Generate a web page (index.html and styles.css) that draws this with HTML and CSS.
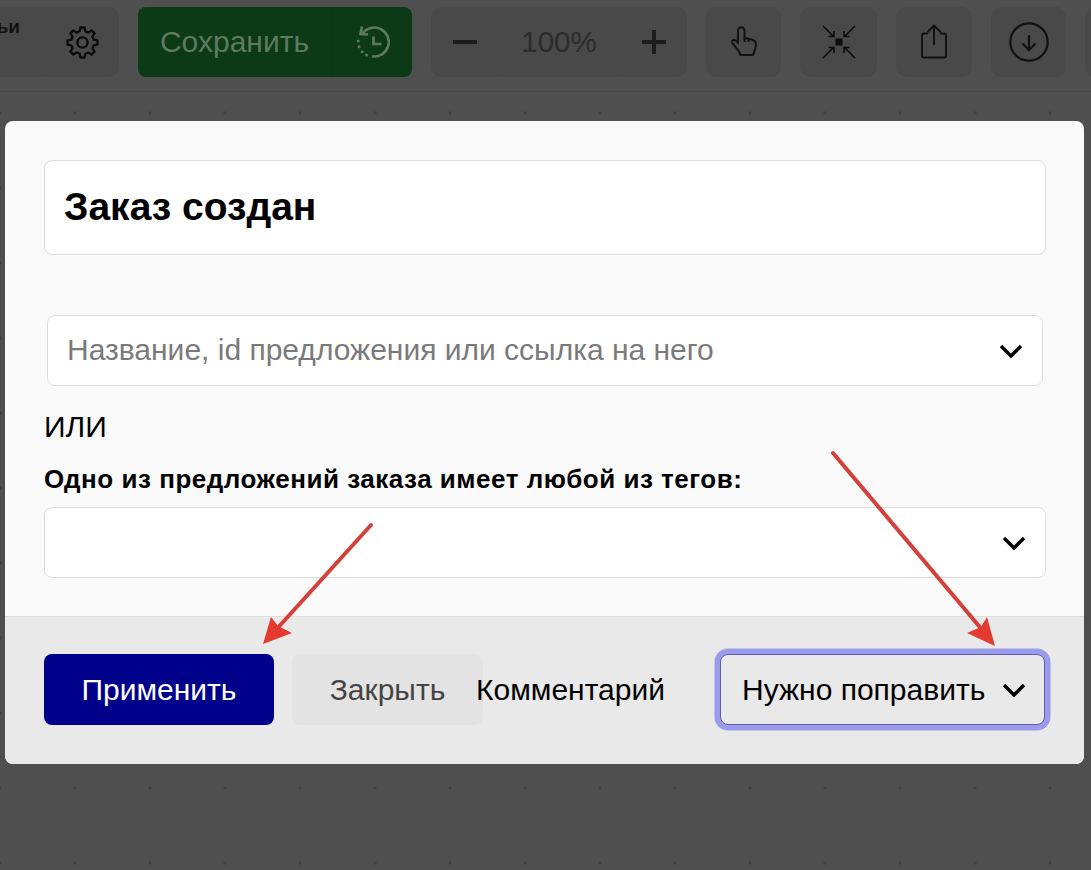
FILE: index.html
```html
<!DOCTYPE html>
<html lang="ru">
<head>
<meta charset="utf-8">
<title>Заказ создан</title>
<link rel="stylesheet" href="styles.css">
</head>
<body>
<header class="toolbar">
  <div class="tool-group first-group">
    <div class="tool-cell label-cell"><span class="cut-label">ьи</span></div>
    <div class="tool-cell gear-cell">
      <svg width="33" height="33" viewBox="0 0 24 24" fill="none" stroke="#0b0b0b" stroke-width="1.7" stroke-linejoin="round"><polygon points="20.15,9.97 22.89,10.47 22.89,13.53 20.15,14.03 19.20,16.33 20.79,18.62 18.62,20.79 16.33,19.20 14.03,20.15 13.53,22.89 10.47,22.89 9.97,20.15 7.67,19.20 5.38,20.79 3.21,18.62 4.80,16.33 3.85,14.03 1.11,13.53 1.11,10.47 3.85,9.97 4.80,7.67 3.21,5.38 5.38,3.21 7.67,4.80 9.97,3.85 10.47,1.11 13.53,1.11 14.03,3.85 16.33,4.80 18.62,3.21 20.79,5.38 19.20,7.67"/><circle cx="12" cy="12" r="3.7"/></svg>
    </div>
  </div>
  <div class="save-btn">
    <span class="save-text">Сохранить</span>
    <span class="save-hist">
      <svg width="38" height="38" viewBox="0 0 38 38" fill="none" stroke="#5d7a60" stroke-width="2.6"><path d="M7.500 10.500A14.500 14.500 0 1 1 17 33.300"/><path d="M7 3.500L5.500 11l7.500 .5"/><path d="M18.500 13.500V21h8"/><path d="M3.200 18v.1M4.200 23.700v.1M7.200 28.700v.1M11.500 32v.1" stroke-linecap="round" stroke-width="3"/></svg>
    </span>
  </div>
  <div class="tool-group zoom-group">
    <div class="tool-cell zoom-btn"><span class="minus"></span></div>
    <div class="tool-cell zoom-val">100%</div>
    <div class="tool-cell zoom-btn plus-cell"><span class="plus"></span></div>
  </div>
  <div class="tool-btn hand-btn">
    <svg width="30" height="34" viewBox="0 0 30 34" fill="none" stroke="#111" stroke-width="2" stroke-linejoin="round"><path d="M9 18V5.500a3.250 3.250 0 0 1 6.500 0V13l3 .5 4 1 3 1.500c1.200 .6 1.500 1.500 1.500 3 0 4-1.500 7-3 11H11.500c-1-4-4-7-7.500-11-2-2.500-.5-4.500 1.500-4 1.500 .4 2.500 1.500 3.500 2.500z"/><path d="M15.500 13v4M19.500 14v3"/></svg>
  </div>
  <div class="tool-btn fit-btn">
    <svg width="34" height="34" viewBox="0 0 34 34" fill="none" stroke="#0c0c0c" stroke-width="1.600"><rect x="13.500" y="13.500" width="7" height="7" fill="#0c0c0c" stroke="none"/><path d="M1 1l11 11M6.500 11.500h5.500V6M33 1L22 12M27.500 11.500h-5.500V6M1 33l11-11M6.500 22.500h5.500V28M33 33L22 22M27.500 22.500h-5.500V28"/></svg>
  </div>
  <div class="tool-btn share-btn">
    <svg width="30" height="36" viewBox="0 0 30 36" fill="none" stroke="#111" stroke-width="1.900" stroke-linejoin="round"><path d="M9 9.500H5a2 2 0 0 0-2 2v20a2 2 0 0 0 2 2h20a2 2 0 0 0 2-2v-20a2 2 0 0 0-2-2h-4"/><path d="M15 21V1.500M8.500 8L15 1.500 21.500 8"/></svg>
  </div>
  <div class="tool-btn down-btn">
    <svg width="40" height="40" viewBox="0 0 40 40" fill="none" stroke="#111" stroke-width="2.200"><circle cx="20" cy="20" r="18.700"/><path d="M20 13v15M13.500 21.500L20 28l6.500-6.500"/></svg>
  </div>
  <div class="tool-btn tail-btn"></div>
</header>

<main class="modal">
  <div class="modal-body">
    <div class="title-field">Заказ создан</div>
    <div class="select select-offer">
      <span class="placeholder">Название, id предложения или ссылка на него</span>
      <svg width="24" height="14" viewBox="0 0 24 14" fill="none" stroke="#000" stroke-width="3.400"><path d="M2 2l10 10L22 2"/></svg>
    </div>
    <div class="or-text">ИЛИ</div>
    <div class="tags-label">Одно из предложений заказа имеет любой из тегов:</div>
    <div class="select select-tags">
      <svg width="24" height="14" viewBox="0 0 24 14" fill="none" stroke="#000" stroke-width="3.400"><path d="M2 2l10 10L22 2"/></svg>
    </div>
  </div>
  <footer class="modal-foot">
    <button class="btn btn-apply">Применить</button>
    <button class="btn btn-close">Закрыть</button>
    <span class="comment-label">Комментарий</span>
    <div class="status-select">
      <span>Нужно поправить</span>
      <svg width="24" height="14" viewBox="0 0 24 14" fill="none" stroke="#000" stroke-width="3.400"><path d="M2 2l10 10L22 2"/></svg>
    </div>
  </footer>
</main>

<svg class="arrows" width="1091" height="870" viewBox="0 0 1091 870">
  <path d="M371 525L274 632" stroke="#d5403a" stroke-width="4" stroke-linecap="round" fill="none"/>
  <polygon points="263,644 271,617 278,626 292,633" fill="#e53a2f"/>
  <path d="M833 453L984 632" stroke="#d5403a" stroke-width="4" stroke-linecap="round" fill="none"/>
  <polygon points="995,646 987,617 981,627 967,633" fill="#e53a2f"/>
</svg>
</body>
</html>
```
FILE: styles.css
```css
* { box-sizing: border-box; }
html, body { margin: 0; height: 100%; }
body {
  position: relative;
  width: 1091px;
  height: 870px;
  overflow: hidden;
  font-family: "Liberation Sans", Arial, sans-serif;
  background-color: #4f4f4f;
  background-image: radial-gradient(circle, #3c3c3c 1.2px, transparent 1.6px);
  background-size: 75px 75px;
  background-position: -37.500px 0.500px;
  color: #000;
}
.toolbar {
  display: flex;
  align-items: flex-start;
  gap: 19px;
  height: 92px;
  padding-top: 7px;
  background: #4f4f4f;
  border-bottom: 1px solid #494949;
  overflow: hidden;
}
.tool-group, .tool-btn {
  flex: none;
  height: 70px;
  background: #494949;
  border-radius: 10px;
  display: flex;
  align-items: center;
  justify-content: center;
}
.first-group { margin-left: -40px; width: 159px; }
.tool-cell {
  height: 100%;
  display: flex;
  align-items: center;
  justify-content: center;
}
.label-cell { width: 83px; border-right: 1px solid #474747; justify-content: flex-end; align-items: flex-start; padding: 10px 22px 0 0; }
.cut-label { font-weight: 700; font-size: 19px; color: #111; line-height: 20px; }
.gear-cell { flex: 1; padding-left: 2px; }
.save-btn {
  flex: none;
  width: 274px;
  height: 70px;
  background: #0c3a17;
  border-radius: 8px;
  display: flex;
  align-items: center;
}
.save-text {
  width: 194px;
  height: 100%;
  display: flex;
  align-items: center;
  justify-content: center;
  font-size: 30px;
  color: #5d7a60;
  border-right: 1px solid #0b3615;
}
.save-hist { flex: 1; display: flex; align-items: center; justify-content: center; padding-left: 3px; }
.zoom-group { width: 256px; }
.zoom-btn { width: 68px; border-right: 1px solid #474747; }
.plus-cell { border-right: 0; border-left: 1px solid #474747; width: 66px; padding-right: 2px; }
.zoom-val { flex: 1; font-size: 29.500px; color: #2c2c2c; padding-right: 2px; }
.minus { display: block; width: 24px; height: 4px; background: #1c1c1c; }
.plus { display: block; width: 24px; height: 24px; background:
  linear-gradient(#1c1c1c, #1c1c1c) center / 24px 4px no-repeat,
  linear-gradient(#1c1c1c, #1c1c1c) center / 4px 24px no-repeat; }
.hand-btn { width: 75px; }
.fit-btn { width: 77px; }
.share-btn { width: 76px; }
.down-btn { width: 75px; }
.tail-btn { width: 60px; }

.modal {
  position: absolute;
  left: 5px;
  top: 121px;
  width: 1079px;
  height: 643px;
  border-radius: 8px;
  overflow: hidden;
  background: #fafafa;
  display: flex;
  flex-direction: column;
}
.modal-body { height: 495px; padding: 39px 38px 0 39px; }
.title-field {
  height: 95px;
  background: #fff;
  border: 1px solid #ddd;
  border-radius: 8px;
  padding: 0 0 2px 19px;
  display: flex;
  align-items: center;
  font-size: 39px;
  font-weight: 700;
}
.select {
  background: #fff;
  border: 1px solid #ddd;
  border-radius: 8px;
  height: 71px;
  display: flex;
  align-items: center;
  justify-content: space-between;
}
.select-offer { margin: 60px 3px 0 3px; padding: 0 19px; }
.placeholder { font-size: 30px; color: #7a7a7a; margin-bottom: 2px; }
.or-text { font-size: 30px; line-height: 34px; margin-top: 24px; }
.tags-label { font-size: 26px; font-weight: 700; line-height: 30px; margin-top: 20px; letter-spacing: 0.52px; }
.select-tags { margin-top: 13px; justify-content: flex-end; padding-right: 19px; }
.modal-foot {
  flex: 1;
  background: #e9e9e9;
  border-top: 1px solid #ddd;
  padding: 37px 39px 0 39px;
  display: flex;
  align-items: flex-start;
}
.btn {
  height: 71px;
  border: 0;
  border-radius: 8px;
  font: inherit;
  font-size: 30px;
  padding: 0;
  flex: none;
}
.btn-apply { width: 230px; background: #00008b; color: #fff; }
.btn-close { width: 191px; margin-left: 18px; background: #e3e3e3; color: #444; }
.comment-label {
  font-size: 30px;
  line-height: 71px;
  margin-left: -7px;
  white-space: nowrap;
}
.status-select {
  margin-left: auto;
  width: 325px;
  height: 71px;
  background: #e9e9e9;
  border: 1px solid #5c5fb0;
  border-radius: 8px;
  box-shadow: 0 0 0 5.500px #9a9bea;
  font-size: 30px;
  display: flex;
  align-items: center;
  justify-content: space-between;
  padding: 0 18px 0 21px;
}
.arrows { position: absolute; left: 0; top: 0; pointer-events: none; }
```
